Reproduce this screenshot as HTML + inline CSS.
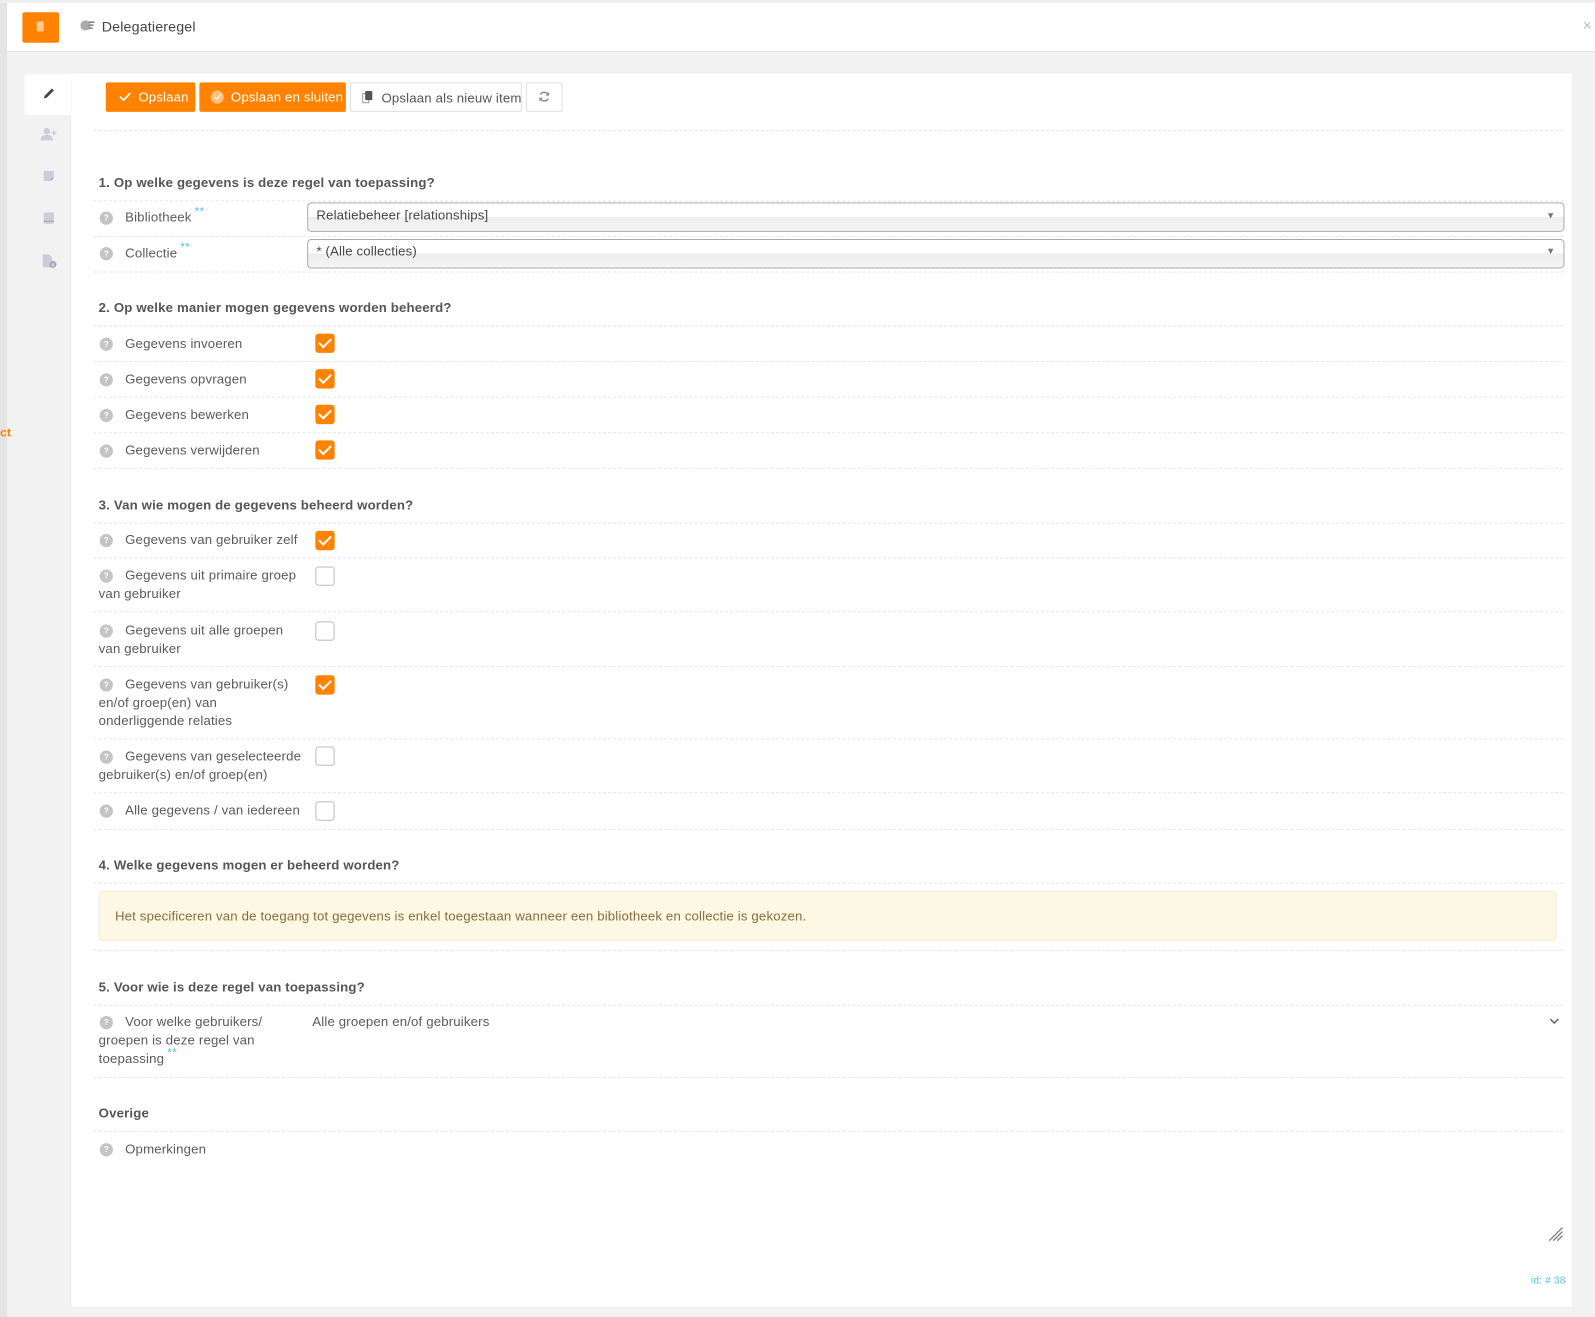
<!DOCTYPE html>
<html><head><meta charset="utf-8"><style>
html,body{margin:0;padding:0;width:1595px;height:1317px;overflow:hidden;background:#f2f2f2;}
#w{position:absolute;left:0;top:0;width:1568px;height:1295px;transform:scale(1.01722,1.01699);transform-origin:0 0;font-family:"Liberation Sans",sans-serif;font-size:13px;color:#5a5a5a;letter-spacing:0.15px;}
.a{position:absolute;}
.t{position:absolute;white-space:nowrap;line-height:18px;}
.h{position:absolute;font-weight:bold;white-space:nowrap;line-height:18px;color:#555;}
.d{position:absolute;left:92px;width:1445px;border-top:1px dashed #e6e6e6;height:0;}
.q{position:absolute;left:98px;width:13px;height:13px;border-radius:50%;background:#c4c4c4;color:#fff;font-size:8px;font-weight:bold;text-align:center;line-height:13px;letter-spacing:0;}
.cb{position:absolute;left:310px;width:19px;height:19px;border-radius:3px;box-sizing:border-box;}
.on{background:#ff8200;}
.on::after{content:"";position:absolute;left:6px;top:2px;width:5px;height:10px;border:solid #fff;border-width:0 2px 2px 0;transform:rotate(45deg);}
.off{border:1px solid #bbb;background:#fff;}
.s{color:#5bc0de;font-size:12px;position:relative;top:-6px;margin-left:3px;}
.btn{position:absolute;top:81px;height:29px;border-radius:2px;box-sizing:border-box;line-height:29px;font-size:13px;white-space:nowrap;}
.sel{position:absolute;left:302px;width:1236px;height:29px;box-sizing:border-box;border:1px solid #aaa;border-radius:4px;background:linear-gradient(#fff 0,#fff 50%,#eee 50%,#f4f4f4 100%);}
</style></head><body><div id="w">
<div class="a" style="left:0;top:0;width:7px;height:1295px;background:#e4e4e4"></div>
<div class="t" style="left:0;top:416px;color:#ff8200;font-weight:bold;font-size:12px">ct</div>
<div class="a" style="left:7px;top:3px;width:1561px;height:47px;background:#fff;border-bottom:1px solid #e4e4e4"></div>
<div class="a" style="left:0;top:0;width:1568px;height:3px;background:#efefef"></div>
<div class="a" style="left:22px;top:12px;width:36px;height:30px;background:#ff8200;border-radius:2px"></div>
<div class="a" style="left:36px;top:21px;width:7px;height:10px;background:#ffc98a;border-radius:1px"></div>
<svg class="a" style="left:79px;top:19px" width="14" height="12" viewBox="0 0 14 12"><circle cx="5" cy="6" r="5" fill="#aaa"/><rect x="8" y="2" width="6" height="1.6" fill="#888"/><rect x="8" y="5" width="5" height="1.6" fill="#888"/><rect x="8" y="8" width="4" height="1.6" fill="#888"/></svg>
<div class="t" style="left:100px;top:17px;font-size:14px;color:#444">Delegatieregel</div>
<div class="t" style="left:1556px;top:17px;font-size:15px;color:#bbb">×</div>
<div class="a" style="left:70px;top:72px;width:1475px;height:1213px;background:#fff;box-shadow:0 0 1px #ddd"></div>
<div class="a" style="left:24px;top:73px;width:46px;height:40px;background:#fff;border-radius:3px 0 0 3px"></div>
<svg class="a" style="left:41px;top:85px" width="14" height="14" viewBox="0 0 14 14"><path d="M2 12 L3 9 L10 2 L12 4 L5 11 Z" fill="#444"/></svg>
<svg class="a" style="left:39px;top:125px" width="18" height="14" viewBox="0 0 18 14"><circle cx="7" cy="4" r="3.2" fill="#ccd"/><path d="M1 13c0-4 3-5.5 6-5.5s6 1.5 6 5.5z" fill="#ccd"/><path d="M14 3v5M11.5 5.5h5" stroke="#ccd" stroke-width="1.3"/></svg>
<svg class="a" style="left:42px;top:167px" width="12" height="12" viewBox="0 0 12 12"><path d="M1 1h10v7l-3 3H1z" fill="#ccd"/><path d="M8 11V8h3" fill="#aab"/></svg>
<svg class="a" style="left:42px;top:208px" width="12" height="13" viewBox="0 0 12 13"><rect x="1" y="1" width="10" height="11" rx="1" fill="#ccd"/><rect x="1" y="9" width="10" height="1.3" fill="#aab"/></svg>
<svg class="a" style="left:41px;top:250px" width="15" height="14" viewBox="0 0 15 14"><path d="M1 0h6l3 3v10H1z" fill="#ccd"/><circle cx="11" cy="10" r="3.5" fill="#aab"/><rect x="10.5" y="9" width="1" height="3" fill="#fff"/></svg>
<div class="btn" style="left:104px;width:88px;background:#ff8200;color:#fff;padding-left:32px">Opslaan</div>
<svg class="a" style="left:117px;top:90px" width="12" height="10" viewBox="0 0 12 10"><path d="M1 5l3.5 3.5L11 1.5" stroke="#fff" stroke-width="1.7" fill="none"/></svg>
<div class="btn" style="left:196px;width:144px;background:#ff8200;color:#fff;padding-left:31px">Opslaan en sluiten</div>
<div class="a" style="left:207px;top:89px;width:13px;height:13px;border-radius:50%;background:#ffc07a"></div>
<svg class="a" style="left:210px;top:92px" width="8" height="7" viewBox="0 0 8 7"><path d="M1 3.5l2 2L7 1" stroke="#fff" stroke-width="1.2" fill="none"/></svg>
<div class="btn" style="left:344px;width:169px;border:1px solid #e0e0e0;background:#fff;color:#555;padding-left:30px">Opslaan als nieuw item</div>
<svg class="a" style="left:356px;top:89px" width="11" height="13" viewBox="0 0 11 13"><rect x="0.5" y="3" width="6" height="9" fill="none" stroke="#999"/><rect x="3" y="0.5" width="7" height="9" rx="1" fill="#555"/></svg>
<div class="btn" style="left:517px;width:36px;border:1px solid #e0e0e0;background:#fff"></div>
<svg class="a" style="left:529px;top:89px" width="12" height="12" viewBox="0 0 12 12"><path d="M10 4.5A4.3 4.3 0 0 0 2.2 4M2 7.5A4.3 4.3 0 0 0 9.8 8" stroke="#888" stroke-width="1.4" fill="none"/><path d="M10.8 1.5v3.5H7.3zM1.2 10.5V7h3.5z" fill="#888"/></svg>
<div class="d" style="top:128px"></div>
<div class="h" style="left:97px;top:171px">1. Op welke gegevens is deze regel van toepassing?</div>
<div class="d" style="top:197px"></div>
<div class="q" style="top:208px">?</div><div class="t" style="left:123px;top:205px">Bibliotheek<span class="s">**</span></div>
<div class="sel" style="top:199px"></div><div class="t" style="left:311px;top:203px;color:#444">Relatiebeheer [relationships]</div><div class="t" style="left:1520px;top:203px;font-size:9px;color:#777">▼</div>
<div class="d" style="top:232px"></div>
<div class="q" style="top:243px">?</div><div class="t" style="left:123px;top:240px">Collectie<span class="s">**</span></div>
<div class="sel" style="top:235px"></div><div class="t" style="left:311px;top:238px;color:#444">* (Alle collecties)</div><div class="t" style="left:1520px;top:238px;font-size:9px;color:#777">▼</div>
<div class="d" style="top:267px"></div>
<div class="h" style="left:97px;top:294px">2. Op welke manier mogen gegevens worden beheerd?</div>
<div class="d" style="top:320px"></div>
<div class="q" style="top:332px">?</div><div class="t" style="left:123px;top:329px">Gegevens invoeren</div><div class="cb on" style="top:328px"></div>
<div class="d" style="top:355px"></div>
<div class="q" style="top:367px">?</div><div class="t" style="left:123px;top:364px">Gegevens opvragen</div><div class="cb on" style="top:363px"></div>
<div class="d" style="top:390px"></div>
<div class="q" style="top:402px">?</div><div class="t" style="left:123px;top:399px">Gegevens bewerken</div><div class="cb on" style="top:398px"></div>
<div class="d" style="top:425px"></div>
<div class="q" style="top:437px">?</div><div class="t" style="left:123px;top:434px">Gegevens verwijderen</div><div class="cb on" style="top:433px"></div>
<div class="d" style="top:460px"></div>
<div class="h" style="left:97px;top:488px">3. Van wie mogen de gegevens beheerd worden?</div>
<div class="d" style="top:514px"></div>
<div class="q" style="top:525px">?</div><div class="t" style="left:123px;top:522px">Gegevens van gebruiker zelf</div><div class="cb on" style="top:522px"></div>
<div class="d" style="top:548px"></div>
<div class="q" style="top:560px">?</div><div class="t" style="left:123px;top:557px">Gegevens uit primaire groep</div><div class="t" style="left:97px;top:575px">van gebruiker</div><div class="cb off" style="top:557px"></div>
<div class="d" style="top:601px"></div>
<div class="q" style="top:614px">?</div><div class="t" style="left:123px;top:611px">Gegevens uit alle groepen</div><div class="t" style="left:97px;top:629px">van gebruiker</div><div class="cb off" style="top:611px"></div>
<div class="d" style="top:655px"></div>
<div class="q" style="top:667px">?</div><div class="t" style="left:123px;top:664px">Gegevens van gebruiker(s)</div><div class="t" style="left:97px;top:682px">en/of groep(en) van</div><div class="t" style="left:97px;top:700px">onderliggende relaties</div><div class="cb on" style="top:664px"></div>
<div class="d" style="top:726px"></div>
<div class="q" style="top:738px">?</div><div class="t" style="left:123px;top:735px">Gegevens van geselecteerde</div><div class="t" style="left:97px;top:753px">gebruiker(s) en/of groep(en)</div><div class="cb off" style="top:734px"></div>
<div class="d" style="top:779px"></div>
<div class="q" style="top:791px">?</div><div class="t" style="left:123px;top:788px">Alle gegevens / van iedereen</div><div class="cb off" style="top:788px"></div>
<div class="d" style="top:815px"></div>
<div class="h" style="left:97px;top:842px">4. Welke gegevens mogen er beheerd worden?</div>
<div class="d" style="top:868px"></div>
<div class="a" style="left:97px;top:876px;width:1433px;height:49px;box-sizing:border-box;background:#fcf8e3;border:1px solid #faebcc;border-radius:3px"></div>
<div class="t" style="left:113px;top:892px;color:#8a6d3b">Het specificeren van de toegang tot gegevens is enkel toegestaan wanneer een bibliotheek en collectie is gekozen.</div>
<div class="d" style="top:934px"></div>
<div class="h" style="left:97px;top:962px">5. Voor wie is deze regel van toepassing?</div>
<div class="d" style="top:988px"></div>
<div class="q" style="top:999px">?</div><div class="t" style="left:123px;top:996px">Voor welke gebruikers/</div><div class="t" style="left:97px;top:1014px">groepen is deze regel van</div><div class="t" style="left:97px;top:1032px">toepassing<span class="s">**</span></div>
<div class="t" style="left:307px;top:996px">Alle groepen en/of gebruikers</div>
<svg class="a" style="left:1523px;top:1001px" width="10" height="7" viewBox="0 0 10 7"><path d="M1 1l4 4 4-4" stroke="#666" stroke-width="1.5" fill="none"/></svg>
<div class="d" style="top:1059px"></div>
<div class="h" style="left:97px;top:1086px">Overige</div>
<div class="d" style="top:1112px"></div>
<div class="q" style="top:1124px">?</div><div class="t" style="left:123px;top:1121px">Opmerkingen</div>
<svg class="a" style="left:1522px;top:1206px" width="15" height="15" viewBox="0 0 15 15"><path d="M1 14L14 1M5 14L14 5M9 14L14 9" stroke="#777" stroke-width="1.2"/></svg>
<div class="t" style="left:1505px;top:1251px;font-size:10px;color:#5bc0de">id: # 38</div>
</div></body></html>
